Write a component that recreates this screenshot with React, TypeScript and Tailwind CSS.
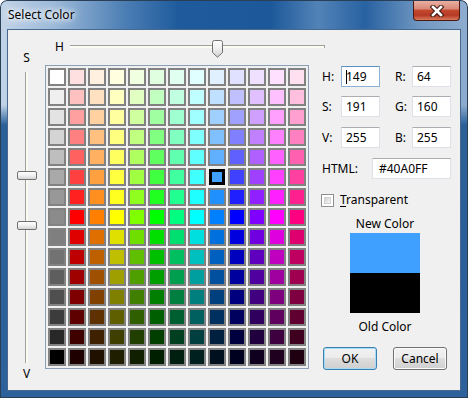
import React from "react";

const HUES = [0, 30, 60, 90, 120, 150, 180, 210, 240, 270, 300, 330];
const GRAYS = [
  "#ffffff", "#efefef", "#e3e3e3", "#d4d4d4", "#bebebe", "#a9a9a9", "#989898", "#8b8b8b",
  "#7f7f7f", "#727272", "#5e5e5e", "#4f4f4f", "#3c3c3c", "#282828", "#000000",
];

function hsv(h: number, s: number, v: number) {
  const c = (n: number) => Math.round(n * 255);
  const i = Math.floor(h / 60) % 6;
  const f = h / 60 - Math.floor(h / 60);
  const p = v * (1 - s);
  const q = v * (1 - s * f);
  const t = v * (1 - s * (1 - f));
  const rgb = [
    [v, t, p], [q, v, p], [p, v, t], [p, q, v], [t, p, v], [v, p, q],
  ][i];
  return `rgb(${c(rgb[0])},${c(rgb[1])},${c(rgb[2])})`;
}

function cellColor(row: number, col: number) {
  if (col === 0) return GRAYS[row];
  const s = row < 8 ? ((row + 1) * 32 - 1) / 255 : 1;
  const v = row < 8 ? 1 : (255 - (row - 7) * 32) / 255;
  return hsv(HUES[col - 1], s, v);
}

function Field({ value, className, focused }: { value: string; className: string; focused?: boolean }) {
  return (
    <div
      className={`h-[21px] bg-white border flex items-center pl-[4px] text-[12px] leading-[16px] ${className} ${
        focused ? "border-[#8db2d6] border-t-[#5f8fc0]" : "border-[#dde1e7] border-t-[#abadb3]"
      }`}
    >
      {focused && <span className="w-px h-[14px] bg-black mr-[-1px]" />}
      {value}
    </div>
  );
}

function Btn({ label, primary }: { label: string; primary?: boolean }) {
  return (
    <div
      className={`w-[54px] h-[23px] rounded-[3px] border flex items-center justify-center text-[12px] bg-[linear-gradient(180deg,#f2f2f2_0%,#ebebeb_50%,#dddddd_50%,#cfcfcf_100%)] ${
        primary ? "border-[#3c7fb1] shadow-[inset_0_0_0_1px_#a6dcf5]" : "border-[#707070] shadow-[inset_0_0_0_1px_#fbfbfb]"
      }`}
    >
      {label}
    </div>
  );
}

export default function App() {
  return (
    <div className="w-[468px] h-[398px] flex flex-col px-[7px] pb-[7px] rounded-t-[7px] font-['Noto_Sans','Open_Sans',sans-serif] text-black shadow-[inset_0_0_0_1px_#2a3e55] bg-[linear-gradient(180deg,transparent_0px,transparent_105px,#2a5f98_125px,#2c619b_100%),linear-gradient(90deg,#c2d4e8_0%,#9ab8d8_12%,#4a7db3_27%,#1f5b9c_38%,#1d599a_58%,#5283b7_68%,#2862a1_78%,#7198c2_90%,#8fadd0_100%)]">
      {/* title bar */}
      <div className="h-[29px] flex items-start">
        <span className="ml-[1px] mt-[7px] text-[12px] leading-[16px] [text-shadow:0_0_8px_#fff,0_0_10px_#fff,0_0_4px_#fff]">
          Select Color
        </span>
        <div className="ml-auto mr-px mt-px w-[47px] h-[20px] rounded-b-[4px] border border-t-0 border-[#4a1a12] flex items-center justify-center bg-[linear-gradient(180deg,#eab0a3_0%,#d98a78_40%,#c4472f_50%,#b53a25_75%,#d87a5c_100%)]">
          <svg width="16" height="12" viewBox="0 0 16 12">
            <path d="M4 2 L12 10 M12 2 L4 10" stroke="#3b1a14" strokeWidth="4.6" strokeLinecap="square" />
            <path d="M4 2 L12 10 M12 2 L4 10" stroke="#ffffff" strokeWidth="2.6" strokeLinecap="square" />
          </svg>
        </div>
      </div>

      {/* client */}
      <div className="flex-1 border border-[#47698f] bg-[#f0f0f0] flex">
        {/* S / V slider */}
        <div className="w-[37px] shrink-0 flex flex-col items-center pt-[20px]">
          <span className="h-[16px] leading-[16px] text-[12px]">S</span>
          <div className="relative mt-[6px] ml-[-1px] w-[3px] h-[291px] border-l border-[#a0a0a0] bg-[#fcfbf2]">
            <div className="absolute left-[-9px] top-[99px] w-[20px] h-[9px] rounded-[2px] border border-[#707070] bg-[linear-gradient(180deg,#ffffff_0%,#f0f0f0_50%,#d4d4d4_100%)]" />
            <div className="absolute left-[-9px] top-[149px] w-[20px] h-[9px] rounded-[2px] border border-[#707070] bg-[linear-gradient(180deg,#ffffff_0%,#f0f0f0_50%,#d4d4d4_100%)]" />
          </div>
          <span className="mt-[3px] h-[16px] leading-[16px] text-[12px]">V</span>
        </div>

        {/* hue slider + grid */}
        <div className="w-[264px] shrink-0 flex flex-col">
          <div className="h-[35px] flex items-start">
            <span className="w-[25px] shrink-0 pl-[10px] mt-[9px] h-[16px] leading-[16px] text-[12px]">H</span>
            <div className="relative mt-[15px] w-[255px] h-[3px] shrink-0 border-t border-r border-[#a0a0a0] bg-[#fcfbf2]">
              <svg className="absolute left-[142px] top-[-6px]" width="11" height="18" viewBox="0 0 11 18">
                <defs>
                  <linearGradient id="th" x1="0" y1="0" x2="0" y2="1">
                    <stop offset="0" stopColor="#ffffff" />
                    <stop offset="0.5" stopColor="#eeeeee" />
                    <stop offset="1" stopColor="#cfcfcf" />
                  </linearGradient>
                </defs>
                <path d="M0.5 2.5 Q0.5 0.5 2.5 0.5 H8.5 Q10.5 0.5 10.5 2.5 V12.5 L5.5 17.2 L0.5 12.5 Z" fill="url(#th)" stroke="#707070" />
              </svg>
            </div>
          </div>
          <div className="w-[264px] h-[304px] border border-[#8ba0b7] p-[2px] grid grid-cols-[repeat(13,18px)] grid-rows-[repeat(15,18px)] gap-[2px]">
            {Array.from({ length: 15 }).map((_, r) =>
              Array.from({ length: 13 }).map((_, c) =>
                r === 5 && c === 8 ? (
                  <div key={`${r}-${c}`} className="p-px">
                    <div className="w-[16px] h-[16px] border-[3px] border-black" style={{ backgroundColor: cellColor(r, c) }} />
                  </div>
                ) : (
                  <div key={`${r}-${c}`} className="w-[18px] h-[18px] border-2 border-[#828282]" style={{ backgroundColor: cellColor(r, c) }} />
                )
              )
            )}
          </div>
        </div>

        {/* right panel */}
        <div className="ml-[13px] w-[138px] flex flex-col pt-[36px] text-[12px] leading-[16px]">
          <div className="flex items-center h-[21px]">
            <span className="w-[19px]">H:</span>
            <Field value="149" className="w-[39px]" focused />
            <span className="ml-[15px] w-[17px]">R:</span>
            <Field value="64" className="w-[39px]" />
          </div>
          <div className="flex items-center h-[21px] mt-[9px]">
            <span className="w-[19px]">S:</span>
            <Field value="191" className="w-[39px]" />
            <span className="ml-[15px] w-[17px]">G:</span>
            <Field value="160" className="w-[39px]" />
          </div>
          <div className="flex items-center h-[21px] mt-[10px]">
            <span className="w-[19px]">V:</span>
            <Field value="255" className="w-[39px]" />
            <span className="ml-[15px] w-[17px]">B:</span>
            <Field value="255" className="w-[39px]" />
          </div>
          <div className="flex items-center h-[21px] mt-[10px]">
            <span className="w-[50px]">HTML:</span>
            <Field value="#40A0FF" className="w-[79px] pl-[6px]" />
          </div>
          <div className="flex items-center mt-[13px] ml-[-1px]">
            <div className="w-[13px] h-[13px] border border-[#8e8f8f] bg-white p-[2px]">
              <div className="w-full h-full border border-[#d2d2d2] bg-[linear-gradient(135deg,#cfcfcf_0%,#e8e8e8_60%,#f6f6f6_100%)]" />
            </div>
            <span className="ml-[6px]">
              <span className="underline underline-offset-2">T</span>ransparent
            </span>
          </div>
          <div className="w-[126px] flex flex-col items-center mt-[8px]">
            <span className="h-[16px]">New Color</span>
            <div className="mt-px w-[70px] h-[40px] bg-[#40a0ff]" />
            <div className="w-[70px] h-[40px] bg-black" />
            <span className="mt-[6px] h-[16px]">Old Color</span>
          </div>
          <div className="flex mt-[12px] ml-px gap-[16px]">
            <Btn label="OK" primary />
            <Btn label="Cancel" />
          </div>
        </div>
      </div>
    </div>
  );
}
